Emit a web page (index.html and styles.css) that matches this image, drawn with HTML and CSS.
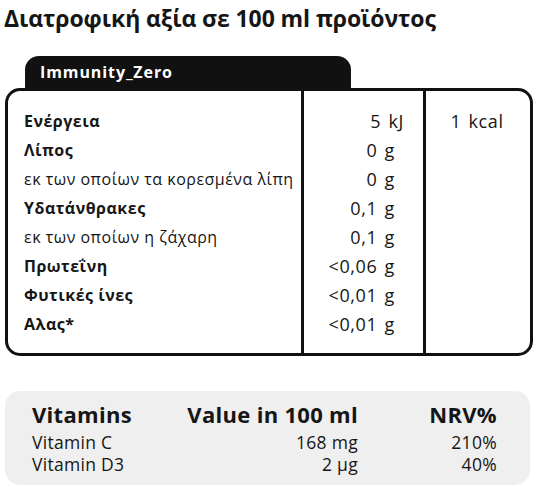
FILE: index.html
```html
<!DOCTYPE html>
<html lang="el">
<head>
<meta charset="utf-8">
<link rel="stylesheet" href="styles.css">
</head>
<body>
<h1 class="title">Διατροφική αξία σε 100 ml προϊόντος</h1>
<div class="card">
  <div class="tab">Immunity_Zero</div>
  <div class="box">
    <div class="col col-label">
      <div class="row b">Ενέργεια</div>
      <div class="row b">Λίπος</div>
      <div class="row">εκ των οποίων τα κορεσμένα λίπη</div>
      <div class="row b">Υδατάνθρακες</div>
      <div class="row">εκ των οποίων η ζάχαρη</div>
      <div class="row b">Πρωτεΐνη</div>
      <div class="row b">Φυτικές ίνες</div>
      <div class="row b">Αλας*</div>
    </div>
    <div class="col col-value">
      <div class="row kj">5 kJ</div>
      <div class="row">0 g</div>
      <div class="row">0 g</div>
      <div class="row">0,1 g</div>
      <div class="row">0,1 g</div>
      <div class="row">&lt;0,06 g</div>
      <div class="row">&lt;0,01 g</div>
      <div class="row">&lt;0,01 g</div>
    </div>
    <div class="col col-kcal">
      <div class="row">1 kcal</div>
    </div>
  </div>
</div>
<div class="vit">
  <div class="vh">Vitamins</div>
  <div class="vh r">Value in 100 ml</div>
  <div class="vh r">NRV%</div>
  <div class="vr">Vitamin C</div>
  <div class="vr r">168 mg</div>
  <div class="vr r">210%</div>
  <div class="vr">Vitamin D3</div>
  <div class="vr r">2 μg</div>
  <div class="vr r">40%</div>
</div>
</body>
</html>
```

FILE: styles.css
```css
* { box-sizing: border-box; }
body {
  margin: 0;
  background: #fff;
  color: #161616;
  font-family: "Open Sans", "Noto Sans", sans-serif;
  width: 540px;
}
.title {
  margin: 0;
  padding: 2px 0 0 4px;
  font-size: 23px;
  line-height: 32px;
  font-weight: 700;
  letter-spacing: -0.1px;
}
.card {
  margin: 22px 0 0 5px;
  width: 528px;
}
.tab {
  margin-left: 20px;
  width: 326px;
  height: 34px;
  background: #111;
  color: #fff;
  border-radius: 14px 14px 0 0;
  padding-left: 15px;
  font-size: 16px;
  font-weight: 700;
  line-height: 32px;
  letter-spacing: 0.9px;
}
.box {
  margin-top: -2px;
  border: 3px solid #111;
  border-radius: 15px;
  height: 268px;
  display: flex;
}
.col {
  padding: 16px 0 0;
}
.col-label {
  width: 296px;
  border-right: 3px solid #111;
  padding-left: 16px;
}
.col-label .row {
  letter-spacing: 0.5px;
}
.col-value {
  width: 122px;
  border-right: 3px solid #111;
  padding-right: 28px;
  text-align: right;
}
.col-kcal {
  flex: 1;
  text-align: center;
  padding-right: 2px;
}
.row {
  height: 29px;
  line-height: 29px;
  font-size: 16px;
  white-space: nowrap;
}
.row.b { font-weight: 700; }
.col-value .row, .col-kcal .row {
  font-size: 18px;
  letter-spacing: 0.6px;
  word-spacing: 2px;
}
.kj { margin-right: -9px; }
.vit {
  margin: 35px 0 0 5px;
  width: 525px;
  background: #efefef;
  border-radius: 15px;
  padding: 11px 33px 10px 27px;
  display: grid;
  grid-template-columns: 150px 176px 1fr;
}
.vh {
  font-size: 22px;
  font-weight: 700;
  line-height: 24px;
  margin-bottom: 5px;
  letter-spacing: 0.3px;
}
.vr {
  font-size: 17.5px;
  line-height: 22px;
  letter-spacing: 0.3px;
}
.r { text-align: right; }
```
